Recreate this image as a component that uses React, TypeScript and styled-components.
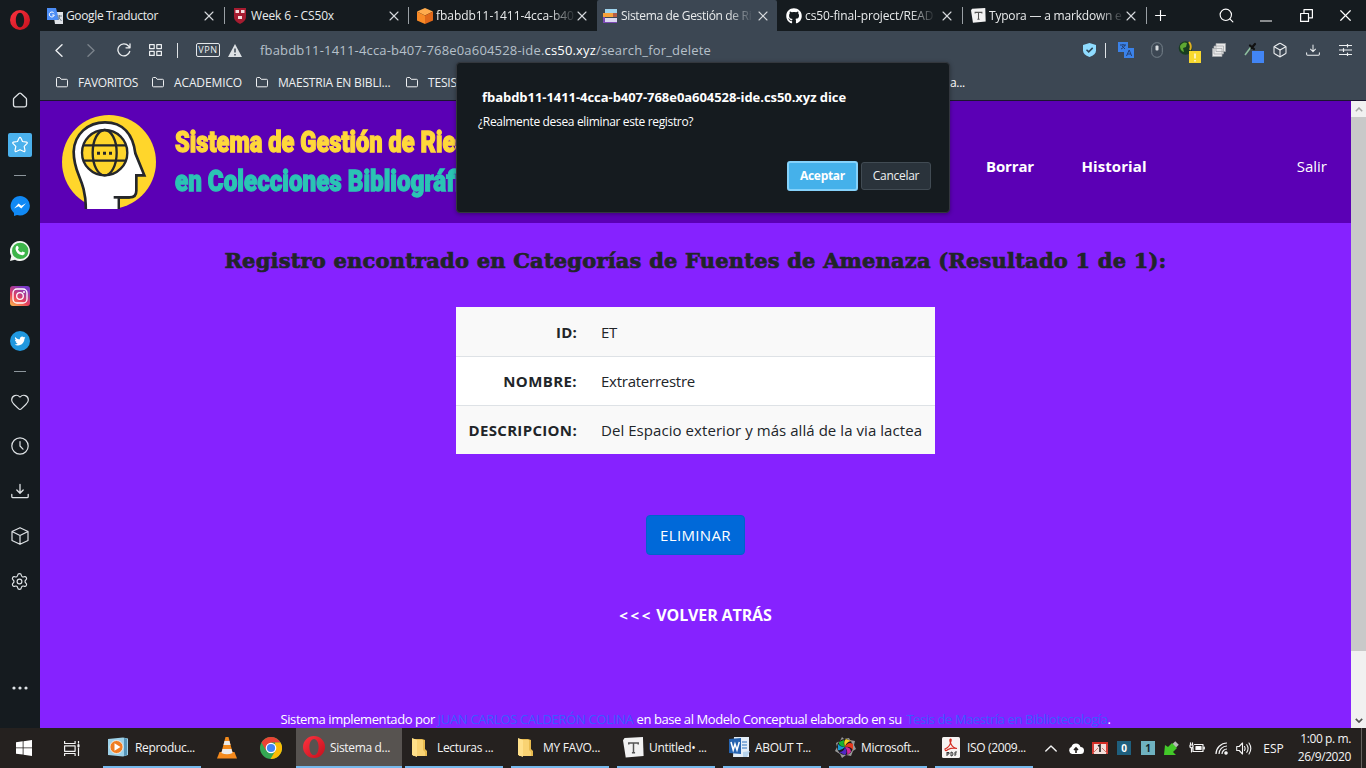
import React from 'react';
import styled, { createGlobalStyle, css } from 'styled-components';
import { X, Search, Plus, Box, Heart, Settings } from 'lucide-react';
import { FaGithub, FaTwitter } from 'react-icons/fa';

const Global = createGlobalStyle`
  * { box-sizing: border-box; }
  body { margin: 0; overflow: hidden; font-family: "Open Sans", "Noto Sans", sans-serif; font-size: 12px; color: #fff; }
  svg { display: block; flex: none; }
  a { text-decoration: none; color: inherit; }
`;

const Desktop = styled.div`
  width: 1366px; height: 768px; display: flex; flex-direction: column; position: relative; background: #151a1e;
`;
const Browser = styled.div`display: flex; height: 728px;`;
const Sidebar = styled.aside`
  width: 40px; display: flex; flex-direction: column; background: #151b1f; color: #dfe3e6;
`;
const SideSlot = styled.div<{ $h: number }>`
  height: ${p => p.$h}px; width: 39px; display: flex; align-items: center; justify-content: center; flex: none;
`;
const SideGap = styled.div<{ $h?: number }>`${p => (p.$h ? `height: ${p.$h}px;` : 'flex: 1;')}`;
const SideRule = styled.span`width: 12px; height: 1px; background: #8d969c;`;
const ActivePanel = styled.div`
  width: 24px; height: 24px; border-radius: 2px; background: #4bb1ec; display: flex; align-items: center; justify-content: center;
`;
const Main = styled.div`width: 1326px; display: flex; flex-direction: column;`;

const TabBar = styled.div`height: 31px; display: flex; background: #151b1f;`;
const Tab = styled.div<{ $w: number; $pl: number; $pr: number; $active?: boolean; $line?: boolean }>`
  width: ${p => p.$w}px; height: 31px; display: flex; align-items: center; flex: none; position: relative;
  padding: 0 ${p => p.$pr}px 0 ${p => p.$pl}px;
  ${p => p.$active && css`background: #3c4753; border-radius: 2px 2px 0 0;`}
  ${p => p.$line && css`&::after { content: ''; position: absolute; right: 0; top: 7px; width: 1px; height: 17px; background: #9aa0a5; }`}
`;
const TabIcon = styled.span<{ $w: number }>`width: ${p => p.$w}px; display: flex; flex: none;`;
const TabTitle = styled.span<{ $ls: number; $fade?: boolean }>`
  white-space: nowrap; line-height: 18px; letter-spacing: ${p => p.$ls}px; color: #e9ebec;
  ${p => p.$fade && css`mask-image: linear-gradient(90deg, #000 82%, transparent 102%);`}
`;
const TabClose = styled.span`margin-left: auto; display: flex; color: #d7dadd;`;
const WindowSlot = styled.span<{ $w: number }>`
  width: ${p => p.$w}px; height: 31px; display: flex; align-items: center; justify-content: center; flex: none;
`;

const Toolbar = styled.div`height: 38px; display: flex; align-items: center; background: #3c4753;`;
const Slot = styled.span<{ $w: number; $dim?: boolean }>`
  width: ${p => p.$w}px; height: 38px; display: flex; align-items: center; justify-content: center; flex: none;
  color: #eceff1; opacity: ${p => (p.$dim ? 0.35 : 1)};
`;
const Divider = styled.i`width: 1px; height: 15px; background: #dfe3e6;`;
const VpnBadge = styled.span`
  width: 24px; height: 14px; border: 1px solid #e4e7ea; border-radius: 2px; font-size: 9px; font-weight: 400; line-height: 12px;
  text-align: center; letter-spacing: .7px;
`;
const Address = styled.span`
  margin-left: 18px; font-size: 13px; line-height: 20px; letter-spacing: .18px; color: #b6c0ca; white-space: nowrap;
`;
const Host = styled.span`color: #fff;`;
const Extensions = styled.div`margin-left: auto; margin-right: 9px; display: flex;`;

const Bookmarks = styled.div`
  height: 32px; display: flex; align-items: center; background: #3c4753; border-bottom: 1px solid #1b1530; padding-bottom: 4px;
`;
const Bookmark = styled.div<{ $w: number; $ls?: number }>`
  width: ${p => p.$w}px; display: flex; align-items: center; gap: 10px; padding-left: 16px; white-space: nowrap;
  line-height: 18px; letter-spacing: ${p => p.$ls ?? -0.2}px; color: #eef0f2; flex: none;
`;
const BookmarkTail = styled.span`line-height: 18px; margin-left: 90px; letter-spacing: -.3px;`;

const Viewport = styled.div`height: 627px; display: flex;`;
const Page = styled.main`width: 1311px; background: #8622ff; display: flex; flex-direction: column; align-items: center;`;
const Header = styled.header`
  width: 100%; height: 122px; background: #5b00b5; display: flex; align-items: center; padding: 2px 24px 0 20px; flex: none;
`;
const Brand = styled.div`margin-left: 15px; width: 811px; padding-bottom: 3px;`;
const BrandLine = styled.div<{ $color: string; $scale: number }>`
  color: ${p => p.$color}; font: 900 29px/39px Roboto, sans-serif; -webkit-text-stroke: 1.3px ${p => p.$color};
  transform: scaleX(${p => p.$scale}); transform-origin: 0 50%; white-space: nowrap; width: 400px;
`;
const Nav = styled.nav`display: flex; flex: 1; padding-top: 6px; font-size: 15px; line-height: 20px;`;
const NavLink = styled.a<{ $bold?: boolean; $w?: number; $ls?: number }>`
  font-weight: ${p => (p.$bold ? 700 : 400)}; letter-spacing: ${p => p.$ls ?? 0}px;
  ${p => (p.$w ? `width: ${p.$w}px;` : 'margin-left: auto;')}
`;
const Heading = styled.h1`
  margin: 22px 0 0; height: 32px; font: 700 21px/32px "DejaVu Serif", serif; letter-spacing: .19px; color: #212529;
  -webkit-text-stroke: .7px #212529; white-space: nowrap;
`;
const Table = styled.div`
  margin-top: 30px; width: 479px; font-size: 15px; color: #212529;
`;
const Row = styled.div<{ $alt?: boolean }>`
  height: 49px; display: flex; align-items: center; background: ${p => (p.$alt ? '#f9f9f9' : '#fff')};
  & + & { border-top: 1px solid #dee2e6; }
`;
const Th = styled.div<{ $ls: number }>`
  width: 133px; padding-right: 12px; text-align: right; font-weight: 700; white-space: nowrap; letter-spacing: ${p => p.$ls}px;
`;
const Td = styled.div<{ $ls: number }>`padding-left: 12px; letter-spacing: ${p => p.$ls}px; white-space: nowrap;`;
const DeleteButton = styled.button`
  margin-top: 61px; width: 99px; height: 40px; background: #0069d9; border: 1px solid #0062cc; border-radius: 4px; color: #fff;
  font: 15px "Open Sans", sans-serif; letter-spacing: .36px; padding: 0; flex: none;
`;
const BackLink = styled.a`
  margin-top: 48px; display: flex; font-weight: 700; font-size: 16px; line-height: 24px; letter-spacing: -.13px;
`;
const Chevrons = styled.span`width: 37px; letter-spacing: 2.600px; font-size: 15px;`;
const Footer = styled.footer`
  margin-top: 82px; font-size: 13px; line-height: 20px; height: 20px; letter-spacing: -.42px; white-space: nowrap; display: flex;
`;
const FootText = styled.span<{ $w: number }>`width: ${p => p.$w}px;`;
const FootLink = styled.a<{ $w?: number; $ls: number }>`
  color: #3a5cff; letter-spacing: ${p => p.$ls}px; ${p => p.$w && `width: ${p.$w}px;`}
`;
const Scrollbar = styled.div`
  width: 15px; background: #f1f1f1; display: flex; flex-direction: column; justify-content: space-between; align-items: center;
`;
const ScrollButton = styled.span`height: 16px; display: flex; align-items: center;`;
const Thumb = styled.span`width: 15px; height: 534px; background: #c9c9c9; margin-bottom: auto;`;

const Dialog = styled.div`
  position: absolute; left: 456px; top: 62px; width: 494px; height: 151px; background: #151b1f; border: 1px solid #33373d;
  border-radius: 4px; padding: 24px 18px 0 21px; box-shadow: 0 1px 4px rgba(0,0,0,.35);
`;
const DialogTitle = styled.div`font-size: 13px; font-weight: 700; line-height: 20px; letter-spacing: -.05px; padding-left: 4px; white-space: nowrap;`;
const DialogText = styled.div`margin-top: 5px; line-height: 20px; letter-spacing: -.34px;`;
const DialogActions = styled.div`margin-top: 29px; display: flex; justify-content: flex-end; align-items: center; gap: 3px;`;
const DialogButton = styled.button<{ $primary?: boolean }>`
  width: 70px; height: 28px; border-radius: 3px; padding: 0 0 1px; font: 400 12px "Open Sans", sans-serif; letter-spacing: -.3px; color: #eef0f1;
  background: #2a333b; border: 1px solid #414b53;
  ${p => p.$primary && css`width: 71px; height: 30px; background: #45b1ea; border: 2px solid #85d2fa; color: #fff; font-weight: 700;`}
`;

const Taskbar = styled.footer`height: 40px; display: flex; background: #25211f; color: #f4f4f4;`;
const TaskIcon = styled.span<{ $w: number }>`
  width: ${p => p.$w}px; display: flex; align-items: center; justify-content: center; flex: none;
`;
const Task = styled.div<{ $active?: boolean; $w?: number; $pad?: number; $icon?: number; $gap?: number }>`
  width: ${p => p.$w ?? 98}px; height: 40px; margin-right: ${p => p.$gap ?? 8}px; display: flex; align-items: center; flex: none;
  padding-left: ${p => p.$pad ?? 6}px; border-bottom: 2px solid #76b9ed; letter-spacing: -.33px; white-space: nowrap;
  background: ${p => (p.$active ? '#575350' : 'transparent')};
  & > span { width: ${p => p.$icon ?? 26}px; flex: none; }
`;
const Tray = styled.div`display: flex; margin-left: 6px; align-items: center; flex: none;`;
const NumberIcon = styled.b<{ $light?: boolean }>`
  width: 14px; height: 14px; line-height: 14px; text-align: center; font-size: 10px; flex: none;
  background: ${p => (p.$light ? '#6fb2c0' : '#1f5f7d')}; color: ${p => (p.$light ? '#10242b' : '#fff')};
`;
const TrayClock = styled.div`
  width: 56px; margin-left: -6px; text-align: right; line-height: 18px; letter-spacing: -.4px; white-space: nowrap;
`;
const ShowDesktop = styled.i`width: 1px; height: 40px; background: #66625f; margin-left: 10px;`;

const line = { fill: 'none', stroke: 'currentColor', strokeLinecap: 'round' as const, strokeLinejoin: 'round' as const };

const Opera = ({ s }: { s: number }) => (
  <svg width={s} height={s} viewBox="0 0 24 24">
    <defs><linearGradient id={`op${s}`} x1="0" y1="0" x2="1" y2="1"><stop offset="0" stopColor="#ff3340" /><stop offset="1" stopColor="#c3101c" /></linearGradient></defs>
    <path fillRule="evenodd" fill={`url(#op${s})`} d="M12 0a12 12 0 1 0 0 24a12 12 0 1 0 0-24zM12 3.2c3 0 5 4 5 8.8s-2 8.8-5 8.8s-5-4-5-8.8s2-8.8 5-8.8z" />
  </svg>
);
const TranslateIcon = () => (
  <svg width="16" height="16" viewBox="0 0 16 16">
    <path fill="#dfe3e8" d="M6 4h10v12H8z" /><path fill="#4c8df5" d="M0 0h9l3 12H0z" />
    <path d="M7 5.2A2.5 2.5 0 1 0 7.3 7H5.2" stroke="#fff" fill="none" /><path d="M10 8h5M12.5 7v1c0 2-1 3-2 4M11.5 9l3 4" stroke="#71808f" fill="none" />
  </svg>
);
const Shield = () => (
  <svg width="14" height="16" viewBox="0 0 14 16"><path fill="#a51c30" d="M1 0h12v9q0 4-6 7q-6-3-6-7z" />
    <path fill="#f5dede" d="M2.500 2h3.500v3H2.500zM8 2h3.500v3H8zM5 8h4v3H5z" /></svg>
);
const Aws = () => (
  <svg width="16" height="16" viewBox="0 0 16 16"><path fill="#ffab4d" d="M8 0l8 3.500L8 7.500 0 3.500z" /><path fill="#f88a26" d="M0 3.500l8 4V16l-8-3.500z" /><path fill="#e0681a" d="M16 3.500l-8 4V16l8-3.500z" /></svg>
);
const Books = () => (
  <svg width="15" height="16" viewBox="0 0 15 16"><path fill="#9fd4ee" d="M2 1h12v4H2z" /><path fill="#f6a13a" d="M0 5h14v4H0z" /><path fill="#b45d48" d="M10 5h4v4h-4z" /><path fill="#dcd7f0" d="M2 10h12v4H2z" /><path fill="#7b49b4" d="M0 9h2v6H0zM2 14h12v1H2z" /></svg>
);
const Typora = ({ s }: { s: number }) => (
  <svg width={s} height={s} viewBox="0 0 20 20"><path fill="#f2f2f2" d="M1.500 1L19 0l.6 18-17 1.600L0 3z" />
    <path d="M5.500 5.800h9M10 5.800V15M8.500 15h3M5.500 5v2.200M14.500 5v2.200" stroke="#555" strokeWidth="1.400" fill="none" /></svg>
);
const Folder = () => (
  <svg width="12" height="11" viewBox="0 0 12 11" {...line}><path d="M.5 8.800V1.500q0-1 1-1h2.300l1.400 1.800h5.300q1 0 1 1v5.500q0 1-1 1h-9q-1 0-1-1z" /></svg>
);
const Download = ({ s }: { s: number }) => (
  <svg width={s} height={s} viewBox="0 0 18 18" {...line} strokeWidth="1.300"><path d="M9 2.500v8.500M5.800 8L9 11.200 12.200 8M.8 12.500v2q0 1.200 1.200 1.200h14q1.200 0 1.200-1.200v-2" /></svg>
);
const TaskFolder = () => (
  <svg width="15" height="19" viewBox="0 0 15 19"><path fill="#e8bb4f" d="M1 1h9l3 1v9l2 2v5H1z" /><path fill="#ffe08a" d="M0 0l5 2v17l-5-2z" /><path fill="#f9d373" d="M5 2h6v10l2 2v4H5z" /></svg>
);

const HeadLogo = () => (
  <svg width="100" height="100" viewBox="60 39 300 300">
    <circle cx="207" cy="186" r="141" fill="#ffd62b" />
    <path fill="#fff" stroke="#25272b" strokeWidth="8" d="M138 327C136 232 101 226 101 155C103 102 144 67 195 67C251 67 279 105 286 160L313 226H289V272Q289 292 269 292H236V327" />
    <path fill="#fff" d="M142 288h90v39h-90z" /><path d="M221 292h48" stroke="#25272b" strokeWidth="8" />
    <rect x="100" y="327" width="150" height="12" fill="#5b00b5" />
    <circle cx="194" cy="158" r="68" fill="#ffd62b" stroke="#25272b" strokeWidth="7" />
    <ellipse cx="194" cy="158" rx="36" ry="68" fill="none" stroke="#25272b" strokeWidth="7" />
    <path d="M130 136h128M130 182h128" stroke="#25272b" strokeWidth="7" />
    <path d="M171 155h9v9h-9zM189 155h9v9h-9zM207 155h9v9h-9z" fill="#25272b" />
  </svg>
);

const tabs = [
  { w: 185, pl: 7, iw: 19, pr: 8, title: 'Google Traductor', ls: -0.35, icon: <TranslateIcon /> },
  { w: 184, pl: 8, iw: 18, pr: 7, title: 'Week 6 - CS50x', ls: -0.15, icon: <Shield /> },
  { w: 188, pl: 8, iw: 19, pr: 10, title: 'fbabdb11-1411-4cca-b40', ls: -0.05, icon: <Aws />, fade: true },
  { w: 180, pl: 6, iw: 18, pr: 6, title: 'Sistema de Gestión de Ri', ls: -0.33, icon: <Books />, fade: true, active: true },
  { w: 186, pl: 9, iw: 19, pr: 8, title: 'cs50-final-project/READ', ls: -0.12, icon: <FaGithub size={16} />, fade: true },
  { w: 184, pl: 8, iw: 18, pr: 8, title: 'Typora — a markdown e', ls: -0.2, icon: <Typora s={15} />, fade: true },
];
const rows = [
  { k: 'ID:', v: 'ET', a: 0.2, b: -0.3 },
  { k: 'NOMBRE:', v: 'Extraterrestre', a: 0.4, b: -0.25 },
  { k: 'DESCRIPCION:', v: 'Del Espacio exterior y más allá de la via lactea', a: 0.33, b: 0.06 },
];

export default function App() {
  return (
    <Desktop>
      <Global />
      <Browser>
        <Sidebar>
          <SideSlot $h={40}><Opera s={20} /></SideSlot>
          <SideGap $h={38} />
          <SideSlot $h={44}>
            <svg width="16" height="16" viewBox="0 0 16 16" {...line} strokeWidth="1.300"><path d="M1.500 7.200q0-.8.600-1.300L7 1.600q1-.8 2 0l4.900 4.300q.6.5.600 1.300v5.800q0 1.800-1.800 1.800H3.300q-1.800 0-1.800-1.800z" /></svg>
          </SideSlot>
          <SideSlot $h={46}>
            <ActivePanel><svg width="18" height="18" viewBox="0 0 18 18" {...line} stroke="#fff" strokeWidth="1.200"><path d="M9 1.300q.6 0 .9.700l1.600 3.500 4.200.6q1 .4.400 1.300l-2.900 3 .8 4.200q0 1.300-1.200.9L9 13.700l-3.800 1.800q-1.200.4-1.200-.9l.8-4.200-2.900-3q-.6-.9.400-1.300l4.200-.6L8.100 2q.3-.7.900-.7z" /></svg></ActivePanel>
          </SideSlot>
          <SideSlot $h={14}><SideRule /></SideSlot>
          <SideSlot $h={48}>
            <svg width="20" height="20" viewBox="0 0 20 20"><path fill="#1089f5" d="M10 0a10 9.700 0 1 1-3 19l-3 1v-3A9.700 9.700 0 0 1 10 0z" /><path fill="#fff" d="M4 12.500L8.600 7.500l2.800 2.300L16 7.300l-4.700 5.200-2.800-2.300z" /></svg>
          </SideSlot>
          <SideSlot $h={42}>
            <svg width="20" height="20" viewBox="0 0 20 20"><path fill="#f3f7f3" d="M10 0a10 10 0 1 1-5 18.700L0 20l1.300-5A10 10 0 0 1 10 0z" /><circle cx="10.200" cy="9.900" r="8.200" fill="#3db54a" /><path fill="#fff" d="M6.500 5q1-.8 1.500.2l.8 1.900-.9 1.300q1.200 2.400 3.500 3.200l1-1.200 2.600 1.200q-.2 2.600-2.700 2.700Q6.300 13.500 5.500 8q0-1.800 1-3z" /></svg>
          </SideSlot>
          <SideSlot $h={48}>
            <svg width="20" height="20" viewBox="0 0 20 20">
              <defs><linearGradient id="ig" x1="0" y1="1" x2=".6" y2="0"><stop offset="0" stopColor="#fdc04c" /><stop offset=".45" stopColor="#e8415a" /><stop offset="1" stopColor="#7a3ac8" /></linearGradient></defs>
              <rect width="20" height="20" rx="3" fill="url(#ig)" /><g fill="none" stroke="#fff" strokeWidth="1.300"><rect x="3" y="3" width="14" height="14" rx="4" /><circle cx="10" cy="10" r="3.300" /></g><circle cx="14" cy="6" r="1" fill="#fff" />
            </svg>
          </SideSlot>
          <SideSlot $h={42}>
            <svg width="20" height="20" viewBox="0 0 20 20"><circle cx="10" cy="10" r="10" fill="#2098df" /><g transform="translate(4.500 4.500)"><FaTwitter size={11} color="#fff" /></g></svg>
          </SideSlot>
          <SideSlot $h={18}><SideRule /></SideSlot>
          <SideSlot $h={44}><Heart size={20} strokeWidth={1.400} /></SideSlot>
          <SideSlot $h={44}>
            <svg width="18" height="18" viewBox="0 0 18 18" {...line} strokeWidth="1.200"><circle cx="9" cy="9" r="8.200" /><path d="M9 4.500V9l3 3.200" /></svg>
          </SideSlot>
          <SideSlot $h={46}><Download s={18} /></SideSlot>
          <SideSlot $h={44}>
            <svg width="18" height="18" viewBox="0 0 18 18" {...line} strokeWidth="1.200"><path d="M9 .7l8 3.800v9L9 17.300l-8-3.800v-9zM1 4.500l8 4 8-4M9 8.500v8.800" /></svg>
          </SideSlot>
          <SideSlot $h={46}><Settings size={19} strokeWidth={1.500} /></SideSlot>
          <SideGap />
          <SideSlot $h={80}><svg width="16" height="4" viewBox="0 0 16 4" fill="currentColor"><circle cx="2" cy="2" r="1.600" /><circle cx="8" cy="2" r="1.600" /><circle cx="14" cy="2" r="1.600" /></svg></SideSlot>
        </Sidebar>

        <Main>
          <TabBar>
            {tabs.map((t, i) => (
              <Tab key={t.title} $w={t.w} $pl={t.pl} $pr={t.pr} $active={t.active} $line={[0, 1, 4, 5].includes(i)}>
                <TabIcon $w={t.iw}>{t.icon}</TabIcon>
                <TabTitle $ls={t.ls} $fade={t.fade}>{t.title}</TabTitle>
                <TabClose><X size={16} strokeWidth={1.600} /></TabClose>
              </Tab>
            ))}
            <WindowSlot $w={27}><Plus size={17} strokeWidth={1.600} /></WindowSlot>
            <WindowSlot $w={36} />
            <WindowSlot $w={32}><Search size={17} strokeWidth={1.600} /></WindowSlot>
            <WindowSlot $w={48}><svg width="12" height="12" viewBox="0 0 12 12" {...line}><path d="M0 11h12" /></svg></WindowSlot>
            <WindowSlot $w={32}><svg width="13" height="13" viewBox="0 0 13 13" {...line} strokeWidth="1.200"><path d="M.6 4.500h7.900v7.900H.6zM4 4.500V.6h8.400v8.200H8.500" /></svg></WindowSlot>
            <WindowSlot $w={46}><X size={19} strokeWidth={1.500} /></WindowSlot>
          </TabBar>

          <Toolbar>
            <Slot $w={38}><svg width="8" height="13" viewBox="0 0 8 13" {...line} strokeWidth="1.400"><path d="M7 .8L1 6.500l6 5.700" /></svg></Slot>
            <Slot $w={26} $dim><svg width="8" height="13" viewBox="0 0 8 13" {...line} strokeWidth="1.400"><path d="M1 .8l6 5.700-6 5.700" /></svg></Slot>
            <Slot $w={39}><svg width="14" height="14" viewBox="0 0 14 14" {...line} strokeWidth="1.300"><path d="M12.700 8.500A6 6 0 1 1 11.500 3l1 1.500M13 .8v4H9" /></svg></Slot>
            <Slot $w={24}><svg width="13" height="12" viewBox="0 0 13 12" {...line} strokeWidth="1.200"><path d="M.6.6h4.600v4H.6zM7.800.6h4.600v4H7.800zM.6 7.400h4.600v4H.6zM7.800 7.400h4.600v4H7.800z" /></svg></Slot>
            <Slot $w={21}><Divider /></Slot>
            <Slot $w={40}><VpnBadge>VPN</VpnBadge></Slot>
            <Slot $w={14}><svg width="14" height="13" viewBox="0 0 14 13"><path fill="#dde1e4" d="M7 0l7 13H0z" /><path d="M7 4.500v4M7 10v1.500" stroke="#3c4753" strokeWidth="1.500" /></svg></Slot>
            <Address>fbabdb11-1411-4cca-b407-768e0a604528-ide.<Host>cs50.xyz</Host>/search_for_delete</Address>
            <Extensions>
              <Slot $w={16}><svg width="13" height="14" viewBox="0 0 13 14"><path fill="#8fdcff" d="M6.500 0L13 2v5.500q0 4-6.500 6.500Q0 11.500 0 7.500V2z" /><path d="M3.500 6.800l2.200 2.100 4-4" fill="none" stroke="#2d4658" strokeWidth="1.500" /></svg></Slot>
              <Slot $w={16}><Divider /></Slot>
              <Slot $w={26}><svg width="16" height="16" viewBox="0 0 16 16"><path fill="#3b82e8" d="M0 0h10v6h6v10H6v-6H0z" /><path d="M2 3h6M5 2v1M7 3q-1 3-4 4M4 4l3 3M8.500 14l2.700-6 2.500 6M9.500 12h3.500" stroke="#233f73" fill="none" /></svg></Slot>
              <Slot $w={36}><svg width="12" height="16" viewBox="0 0 12 16"><rect x=".7" y=".7" width="10.600" height="14.600" rx="5" fill="none" stroke="#76828b" /><rect x="4.500" y="3.500" width="3" height="5" rx="1" fill="#d8dcdf" /></svg></Slot>
              <Slot $w={28}><svg width="24" height="26" viewBox="0 0 24 26"><circle cx="8.500" cy="11" r="6.800" fill="#183d20" /><path fill="#5fa832" d="M3 9q3-5 7-3l-1 4-3 1 1 4q-4-1-4-6z" /><path d="M12 5q3 4 1 8" stroke="#e0b023" strokeWidth="2" fill="none" /><path fill="#f8d92f" d="M12 14h12v12H12z" /><path d="M18 16.500v5M18 23v1.500" stroke="#fff" strokeWidth="1.300" /></svg></Slot>
              <Slot $w={32}><svg width="14" height="14" viewBox="0 0 14 14" stroke="#a1a5a8" strokeWidth=".7" fill="#e9e9e9"><path d="M4 .5h9.500v8H4zM2 3h9.500v8H2zM.5 5.500H10v8H.5z" /></svg></Slot>
              <Slot $w={32}><svg width="26" height="26" viewBox="0 0 26 26"><path d="M7 18l6-8" stroke="#8ebf9f" strokeWidth="1.500" /><path d="M12 8.500l4 3.500M13.500 11L17 7" stroke="#111" strokeWidth="2.200" strokeLinecap="round" /><path fill="#4285f4" d="M14 14h12v12H14z" /></svg></Slot>
              <Slot $w={26}><Box size={16} strokeWidth={1.600} /></Slot>
              <Slot $w={40}><Download s={14} /></Slot>
              <Slot $w={24}><svg width="13" height="12" viewBox="0 0 13 12" {...line} strokeWidth="1.200"><path d="M.5 1.500h12M.5 6h12M.5 10.500h12M8.500 0v3M4.500 4.500v3M8.500 9v3" /></svg></Slot>
            </Extensions>
          </Toolbar>
          <Bookmarks>
            <Bookmark $w={96} $ls={-0.4}><Folder />FAVORITOS</Bookmark>
            <Bookmark $w={104} $ls={-0.12}><Folder />ACADEMICO</Bookmark>
            <Bookmark $w={150}><Folder />MAESTRIA EN BIBLI...</Bookmark>
            <Bookmark $w={470}><Folder />TESIS</Bookmark>
            <BookmarkTail>a...</BookmarkTail>
          </Bookmarks>

          <Viewport>
            <Page>
              <Header>
                <HeadLogo />
                <Brand>
                  <BrandLine $color="#ffd83b" $scale={0.815}>Sistema de Gestión de Riesgos</BrandLine>
                  <BrandLine $color="#2bc4b4" $scale={0.834}>en Colecciones Bibliográficas</BrandLine>
                </Brand>
                <Nav>
                  <NavLink $bold $w={95.5} $ls={-0.15}>Borrar</NavLink>
                  <NavLink $bold $w={70} $ls={0.08}>Historial</NavLink>
                  <NavLink>Salir</NavLink>
                </Nav>
              </Header>
              <Heading>Registro encontrado en Categorías de Fuentes de Amenaza (Resultado 1 de 1):</Heading>
              <Table>
                {rows.map((r, i) => (
                  <Row key={r.k} $alt={i !== 1}><Th $ls={r.a}>{r.k}</Th><Td $ls={r.b}>{r.v}</Td></Row>
                ))}
              </Table>
              <DeleteButton>ELIMINAR</DeleteButton>
              <BackLink><Chevrons>{'<<<'}</Chevrons>VOLVER ATRÁS</BackLink>
              <Footer>
                <FootText $w={157}>Sistema implementado por</FootText>
                <FootLink $w={199} $ls={-0.3}>JUAN CARLOS CALDERÓN COLINA</FootLink>
                <FootText $w={270}>en base al Modelo Conceptual elaborado en su</FootText>
                <FootLink $ls={-0.41}>Tesis de Maestría en Bibliotecología</FootLink>
                <span>.</span>
              </Footer>
            </Page>
            <Scrollbar>
              <ScrollButton><svg width="8" height="5" viewBox="0 0 8 5"><path d="M.8 4.200L4 1l3.200 3.200" stroke="#a5a5a5" strokeWidth="1.500" fill="none" /></svg></ScrollButton>
              <Thumb />
              <ScrollButton><svg width="8" height="5" viewBox="0 0 8 5"><path d="M.8.800L4 4 7.200.800" stroke="#505050" strokeWidth="1.700" fill="none" /></svg></ScrollButton>
            </Scrollbar>
          </Viewport>
        </Main>
      </Browser>

      <Taskbar>
        <TaskIcon $w={48}><svg width="16" height="16" viewBox="0 0 16 16" fill="#fff"><path d="M0 2.300L6.700 1.300v6.200H0zM7.500 1.200L16 0v7.500H7.500zM0 8.300h6.700v6.300L0 13.700zM7.500 8.300H16V16l-8.500-1.200z" /></svg></TaskIcon>
        <TaskIcon $w={48}><svg width="16" height="15" viewBox="0 0 16 15" {...line} strokeWidth="1.200"><path d="M.6 0v2.500h10.500V0M.6 4.800h10.500v5.500H.6zM.6 15v-2.500h10.500V15M14.500 0v2M14.500 7v8" /><path d="M14.500 4v1.500" strokeWidth="2.200" /></svg></TaskIcon>
        <TaskIcon $w={7} />
        <Task $pad={5} $icon={27}>
          <span><svg width="20" height="20" viewBox="0 0 20 20"><path fill="#9ed1e8" d="M0 2l15-1.500 5 1V18l-5 1.500L0 18z" /><path fill="#5695b8" d="M16 1l3 .7V18l-3 1z" /><circle cx="8.500" cy="10" r="6.500" fill="#ef7d22" stroke="#fff" strokeWidth=".7" /><path fill="#fff" d="M6.500 6.200l6 3.800-6 3.800z" /></svg></span>Reproduc...
        </Task>
        <TaskIcon $w={36}><svg width="20" height="22" viewBox="0 0 20 22"><path fill="#f58a1d" d="M2.500 15h15l2.500 6.500H0z" /><path fill="#f28a1c" d="M8.500 0h3l4.500 17q-6 3-12 0z" /><path fill="#ececec" d="M7.500 4h5l1 4h-7zM5.500 12h9l1.100 4q-5.600 2.500-11.200 0z" /></svg></TaskIcon>
        <TaskIcon $w={51}>
          <svg width="22" height="22" viewBox="0 0 22 22"><circle cx="11" cy="11" r="11" fill="#34a853" /><path fill="#ea4335" d="M1.500 5.500A11 11 0 0 1 20.500 5.500H11l-5 8z" /><path fill="#fbbc05" d="M20.500 5.500A11 11 0 0 1 10.500 22l5-8.500L15 5.500z" /><circle cx="11" cy="11" r="5.300" fill="#fff" /><circle cx="11" cy="11" r="4.100" fill="#4285f4" /></svg>
        </TaskIcon>
        <Task $active $w={106} $pad={7} $icon={27} $gap={3}><span><Opera s={22} /></span>Sistema d...</Task>
        <Task $pad={7} $icon={25}><span><TaskFolder /></span>Lecturas ...</Task>
        <Task $pad={7} $icon={25}><span><TaskFolder /></span>MY FAVO...</Task>
        <Task><span><Typora s={21} /></span>Untitled• ...</Task>
        <Task><span>
          <svg width="21" height="21" viewBox="0 0 21 21"><path fill="#e5eef7" d="M5 0h15v20H4z" /><path fill="#2563b0" d="M0 2l12-1v16L0 16z" /><path d="M2 5l2.200 8L6 7l2 6 2.300-8" stroke="#fff" strokeWidth="1.500" fill="none" /><path d="M13 5h5M13 8h5M13 11h5" stroke="#2d71bd" /><path fill="#b7d4ed" d="M14 15l7-1-3 6h-4z" /></svg>
        </span>ABOUT T...</Task>
        <Task><span>
          <svg width="21" height="21" viewBox="0 0 21 21"><path fill="#999" d="M7 0l2 2 5-1 1 2 5 1-1 4 2 4-3 2-2 5-5-1-4 3-2-4-5-3 2-4-1-4 4-2z" /><circle cx="10" cy="10" r="8" fill="#1a1a1a" /><path fill="#18b430" d="M10 10Q3 9 4 5l5-2q-1 4 1 7z" /><path fill="#f3d51d" d="M10 10Q8 4 11 2l5 2q-5 1-6 6z" /><path fill="#e63a1f" d="M10 10q3-6 8-3v6q-3-4-8-3z" /><path fill="#d02898" d="M10 10q6 0 6 5l-4 3q1-4-2-8z" /><path fill="#5127c5" d="M10 10q3 5 0 8l-6-3q5 0 6-5z" /><path fill="#159ad2" d="M10 10q-4 4-7 3V7q2 3 7 3z" /></svg>
        </span>Microsoft...</Task>
        <Task $pad={7} $icon={25}><span>
          <svg width="18" height="21" viewBox="0 0 18 21"><rect width="18" height="21" rx="1.500" fill="#f7f3f2" /><path d="M3 12q5-2 6-8 .5-2-.5-2-1.500 1 .5 5 2 4 6 4.500-5-1-9 1-3 2.500-3-.5z" stroke="#d42a1f" strokeWidth="1.200" fill="none" /><path d="M5 15v4M5 15.500h2v1.500H5M9 15v4q2 0 2-2t-2-2M13 19v-4h2M13 17h1.500" stroke="#333" fill="none" /></svg>
        </span>ISO (2009...</Task>
        <Tray>
          <TaskIcon $w={8}><svg width="12" height="7" viewBox="0 0 12 7" {...line} strokeWidth="1.400"><path d="M.8 6L6 1l5.200 5" /></svg></TaskIcon>
          <TaskIcon $w={42}><svg width="16" height="11" viewBox="0 0 16 11"><path fill="#fff" d="M4 11a3.800 3.800 0 0 1-.5-7.200A4.700 4.700 0 0 1 12.500 4 3.500 3.500 0 0 1 12.500 11z" /><path d="M8 10V5.500M6 7l2-2 2 2" stroke="#25211f" strokeWidth="1.600" fill="none" /></svg></TaskIcon>
          <TaskIcon $w={6}><svg width="16" height="12" viewBox="0 0 16 12"><path fill="#f4dfdb" d="M0 0h16v12H0z" /><path d="M0 1h16M1 0v12M15 0v12" stroke="#d22d25" strokeWidth="1.800" /><path d="M1 11l5-5M15 11l-5-5" stroke="#cb736a" /><path d="M6 4l2-1v7" stroke="#222" strokeWidth="1.600" fill="none" /></svg></TaskIcon>
          <TaskIcon $w={42}><NumberIcon>0</NumberIcon></TaskIcon>
          <TaskIcon $w={6}><NumberIcon $light>1</NumberIcon></TaskIcon>
          <TaskIcon $w={41}><svg width="16" height="16" viewBox="0 0 16 16"><path d="M8 8l5-5" stroke="#b5b9b5" strokeWidth="5" /><path fill="#43c929" d="M1 5l3 2 4-4 5 5-4 4 3 3H0z" /></svg></TaskIcon>
          <TaskIcon $w={9}><svg width="16" height="12" viewBox="0 0 16 12" {...line} strokeWidth="1.200"><path d="M5.500 2.500H14v7H4V6M15.300 5v2M1 3v2q1.500 1.500 3 0V3zM1.500.8v2M3.500.8v2M2.500 6v4" /><path fill="#fff" d="M7 4.500h5v3H7z" /></svg></TaskIcon>
          <TaskIcon $w={41}><svg width="13" height="13" viewBox="0 0 13 13" {...line} strokeWidth="1.200" strokeLinecap="butt"><path d="M1 12A11 11 0 0 1 12 1M4 12A8 8 0 0 1 12 4M7 12A5 5 0 0 1 12 7" /><circle cx="11" cy="11" r="1.200" fill="#fff" /></svg></TaskIcon>
          <TaskIcon $w={4}><svg width="16" height="13" viewBox="0 0 16 13" {...line} strokeWidth="1.100"><path d="M.7 4.500h2.500L6.500 1v11L3.200 8.500H.7zM8.500 4.500q1.200 2 0 4M10.800 2.700q2.500 3.800 0 7.600M13 1q3.600 5.500 0 11" /></svg></TaskIcon>
          <TaskIcon $w={55}>ESP</TaskIcon>
          <TrayClock>1:00 p. m.<br />26/9/2020</TrayClock>
          <ShowDesktop />
        </Tray>
      </Taskbar>

      <Dialog>
        <DialogTitle>fbabdb11-1411-4cca-b407-768e0a604528-ide.cs50.xyz dice</DialogTitle>
        <DialogText>¿Realmente desea eliminar este registro?</DialogText>
        <DialogActions>
          <DialogButton $primary>Aceptar</DialogButton>
          <DialogButton>Cancelar</DialogButton>
        </DialogActions>
      </Dialog>
    </Desktop>
  );
}
